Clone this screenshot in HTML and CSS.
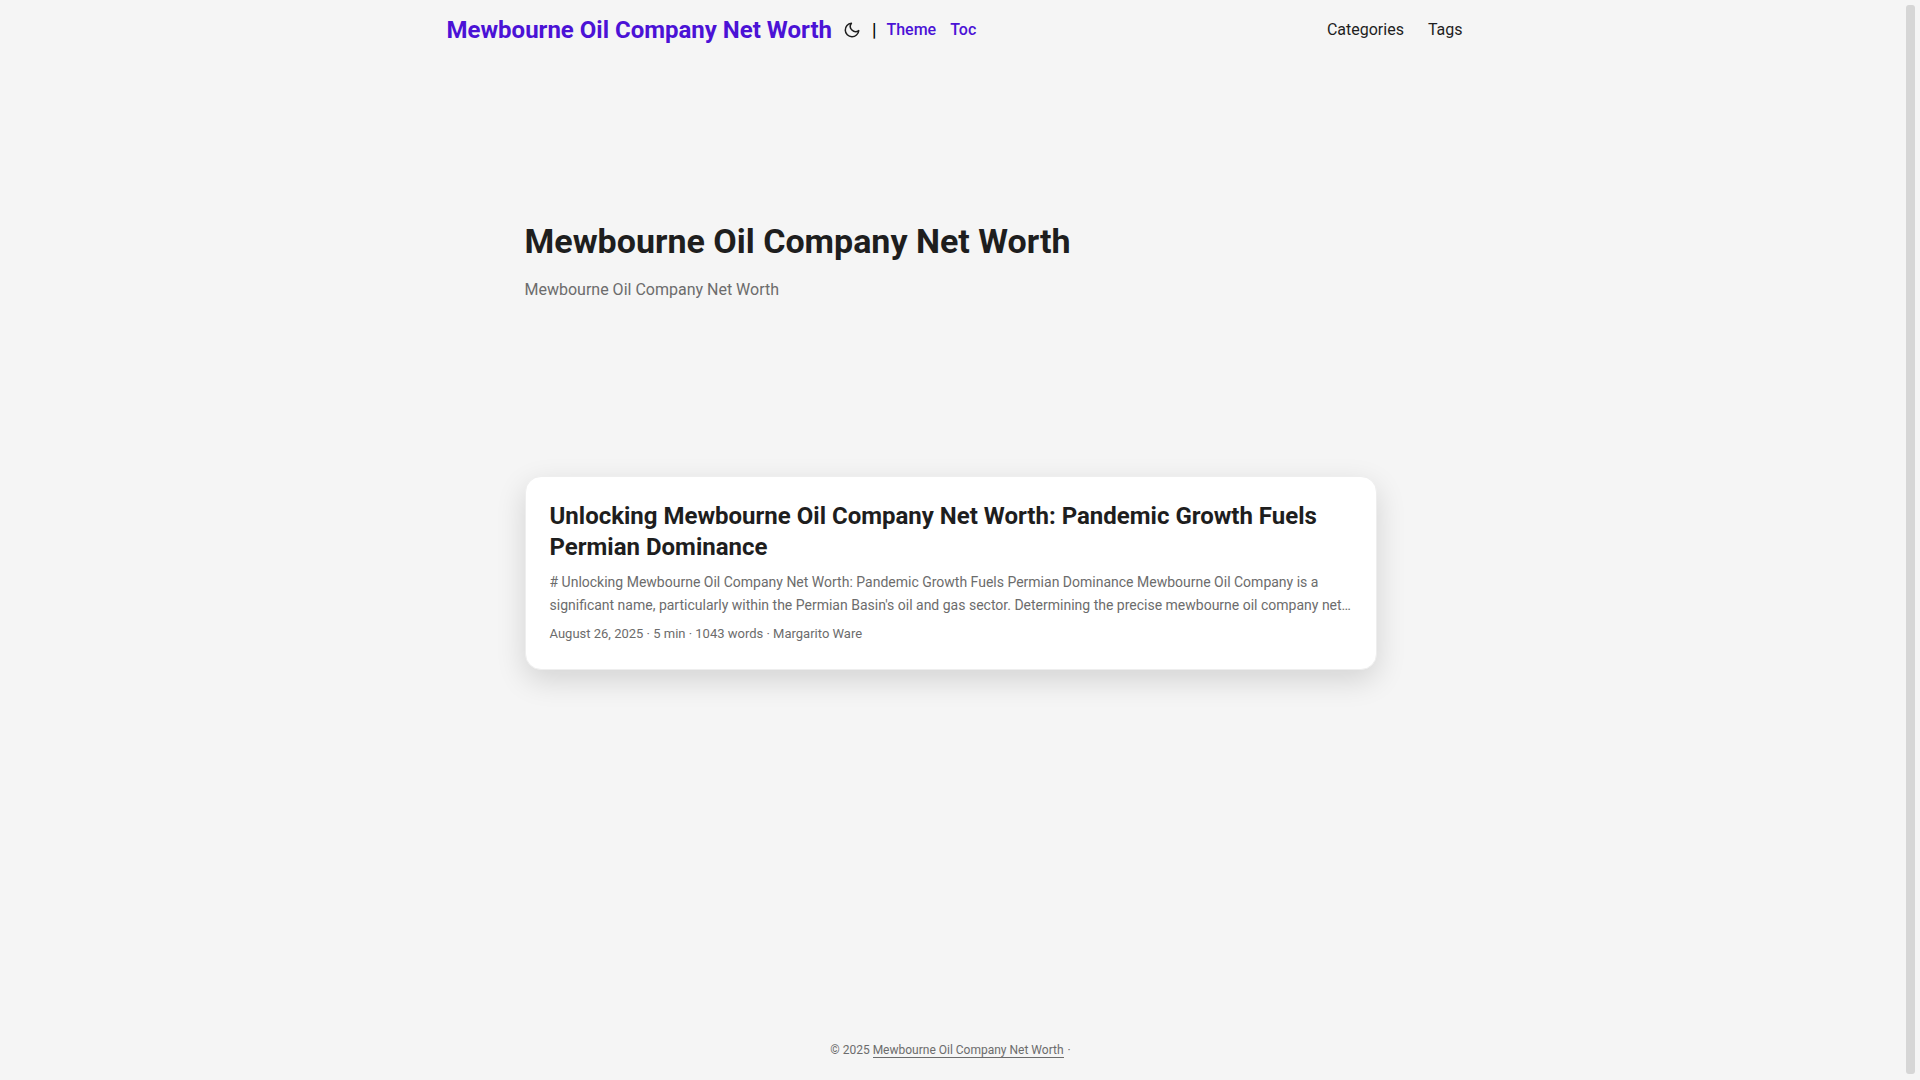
FILE: index.html
```html
<!DOCTYPE html>
<html lang="en">
  <head>
    <meta charset="UTF-8" />
    <meta name="viewport" content="width=device-width, initial-scale=1.0" />
    <title>Mewbourne Oil Company Net Worth</title>
    <link rel="stylesheet" href="styles.css">
  </head>

  <body>
    <div class="page">
      <header class="header">
        <nav class="nav">
          <div class="logo">
            <a class="logo-link" href="#">Mewbourne Oil Company Net Worth</a>
            <button class="theme-toggle" type="button" aria-label="Toggle theme">
              <svg width="18" height="18" viewBox="0 0 24 24" fill="none" stroke="currentColor" stroke-width="2" stroke-linecap="round" stroke-linejoin="round">
                <path d="M21 12.79A9 9 0 1 1 11.21 3 7 7 0 0 0 21 12.79z"></path>
              </svg>
            </button>
            <span class="divider">|</span>
            <a class="switch" href="#">Theme</a>
            <a class="switch" href="#">Toc</a>
          </div>
          <ul class="menu">
            <li><a href="#">Categories</a></li>
            <li><a href="#">Tags</a></li>
          </ul>
        </nav>
      </header>

      <main class="main">
        <section class="home-info">
          <h1>Mewbourne Oil Company Net Worth</h1>
          <p>Mewbourne Oil Company Net Worth</p>
        </section>

        <article class="post">
          <h2>Unlocking Mewbourne Oil Company Net Worth: Pandemic Growth Fuels Permian Dominance</h2>
          <p class="summary"># Unlocking Mewbourne Oil Company Net Worth: Pandemic Growth Fuels Permian Dominance Mewbourne Oil Company is a significant name, particularly within the Permian Basin's oil and gas sector. Determining the precise mewbourne oil company net…</p>
          <div class="meta">August 26, 2025 · 5 min · 1043 words · Margarito Ware</div>
        </article>
      </main>

      <footer class="footer">
        <span>© 2025 <a href="#">Mewbourne Oil Company Net Worth</a></span>
        <span>·</span>
      </footer>
    </div>

    <div class="scrollbar" aria-hidden="true">
      <div class="thumb"></div>
    </div>
  </body>
</html>
```

FILE: styles.css
```css
:root {
  --gap: 24px;
  --bg: #f5f5f5;
  --primary: #1e1e1e;
  --secondary: #6c6c6c;
  --accent: #4b12d6;
}

* {
  box-sizing: border-box;
  margin: 0;
  padding: 0;
}

body {
  display: flex;
  min-height: 100vh;
  background: var(--bg);
  font-family: Roboto, "Liberation Sans", sans-serif;
  font-size: 16px;
  line-height: 26px;
  color: var(--primary);
}

a {
  color: inherit;
  text-decoration: none;
}

.page {
  display: flex;
  flex: 1;
  flex-direction: column;
}

.scrollbar {
  display: flex;
  width: 19px;
  padding: 5px 5px 6px;
}

.thumb {
  flex: 1;
  background: #d6d6d6;
  border-radius: 3px;
}

.nav {
  display: flex;
  justify-content: space-between;
  max-width: 1072px;
  margin: 0 auto;
  padding: 0 var(--gap) 0 32px;
  line-height: 60px;
}

.logo {
  display: flex;
  align-items: center;
  color: var(--accent);
  font-weight: 500;
}

.logo-link {
  font-size: 24px;
  font-weight: 700;
}

.theme-toggle {
  display: flex;
  margin: 0 11px;
  border: 0;
  background: none;
  color: var(--primary);
  cursor: pointer;
}

.divider {
  margin-right: 10px;
  color: #000;
  font-size: 18px;
}

.switch {
  margin-right: 14px;
}

.menu {
  display: flex;
  gap: var(--gap);
  list-style: none;
}

.main {
  flex: 1;
  width: 100%;
  max-width: 900px;
  margin: 0 auto;
  padding: var(--gap);
}

.home-info {
  display: flex;
  flex-direction: column;
  justify-content: center;
  min-height: 320px;
  margin: 24px 0 48px;
}

.home-info h1 {
  font-size: 34px;
  line-height: 44px;
}

.home-info p {
  margin: 14px 0;
  color: var(--secondary);
}

.post {
  padding: var(--gap);
  background: #fff;
  border: 1px solid #eee;
  border-radius: 16px;
  box-shadow: 0 10px 30px rgba(0, 0, 0, 0.14);
}

.post h2 {
  font-size: 24px;
  line-height: 31px;
}

.summary {
  margin: 8px 0 6px;
  color: var(--secondary);
  font-size: 14px;
  line-height: 23px;
}

.meta {
  color: var(--secondary);
  font-size: 13px;
  line-height: 22px;
}

.footer {
  display: flex;
  justify-content: center;
  gap: 4px;
  padding: 18px var(--gap);
  color: var(--secondary);
  font-size: 12px;
  line-height: 24px;
}

.footer a {
  border-bottom: 1px solid var(--secondary);
}
```
